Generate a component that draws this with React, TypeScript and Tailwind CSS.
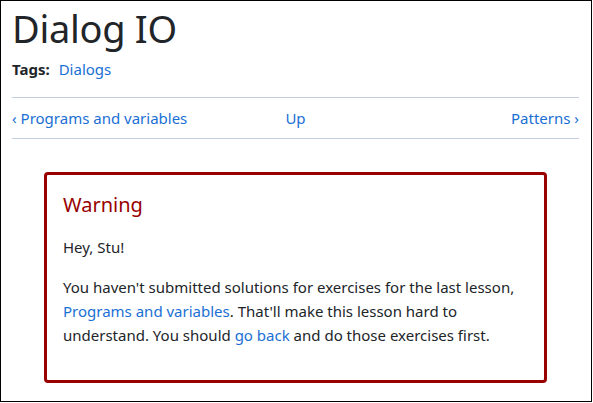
import React from "react";

export default function App() {
  const font = { fontFamily: '"Segoe UI", "Noto Sans", sans-serif' };
  return (
    <div className="w-[593px] h-[403px] bg-white" style={font}>
      <div className="w-[592px] h-[402px] border border-black pl-[11px] pr-[12px] text-[#212529]">
        <h1 className="text-[38px] leading-[48px] font-normal mt-[3px] tracking-[-0.3px]">Dialog IO</h1>
        <div className="mt-[6px] text-[15px] leading-[22px] flex">
          <span className="font-bold">Tags:</span>
          <a className="ml-[9px] text-[#1a6fd4]">Dialogs</a>
        </div>
        <div className="mt-[17px] border-t border-b border-[#c3cfe0] grid grid-cols-3 items-center h-[42px] text-[15px] text-[#1a6fd4]">
          <a className="justify-self-start">‹ Programs and variables</a>
          <a className="justify-self-center">Up</a>
          <a className="justify-self-end">Patterns ›</a>
        </div>
        <div className="mx-8 mt-[33px] border-[3px] border-[#990000] rounded-[4px] px-[16px] pt-[16px] pb-[20px] h-[211px] text-[15px]">
          <h2 className="text-[20px] leading-[28px] text-[#990000]">Warning</h2>
          <p className="mt-[16px] leading-[24px]">Hey, Stu!</p>
          <p className="mt-[16px] leading-[24px]">
            You haven't submitted solutions for exercises for the last lesson,{" "}
            <a className="text-[#1a6fd4]">Programs and variables</a>. That'll make this lesson hard to
            understand. You should <a className="text-[#1a6fd4]">go back</a> and do those exercises first.
          </p>
        </div>
      </div>
    </div>
  );
}
